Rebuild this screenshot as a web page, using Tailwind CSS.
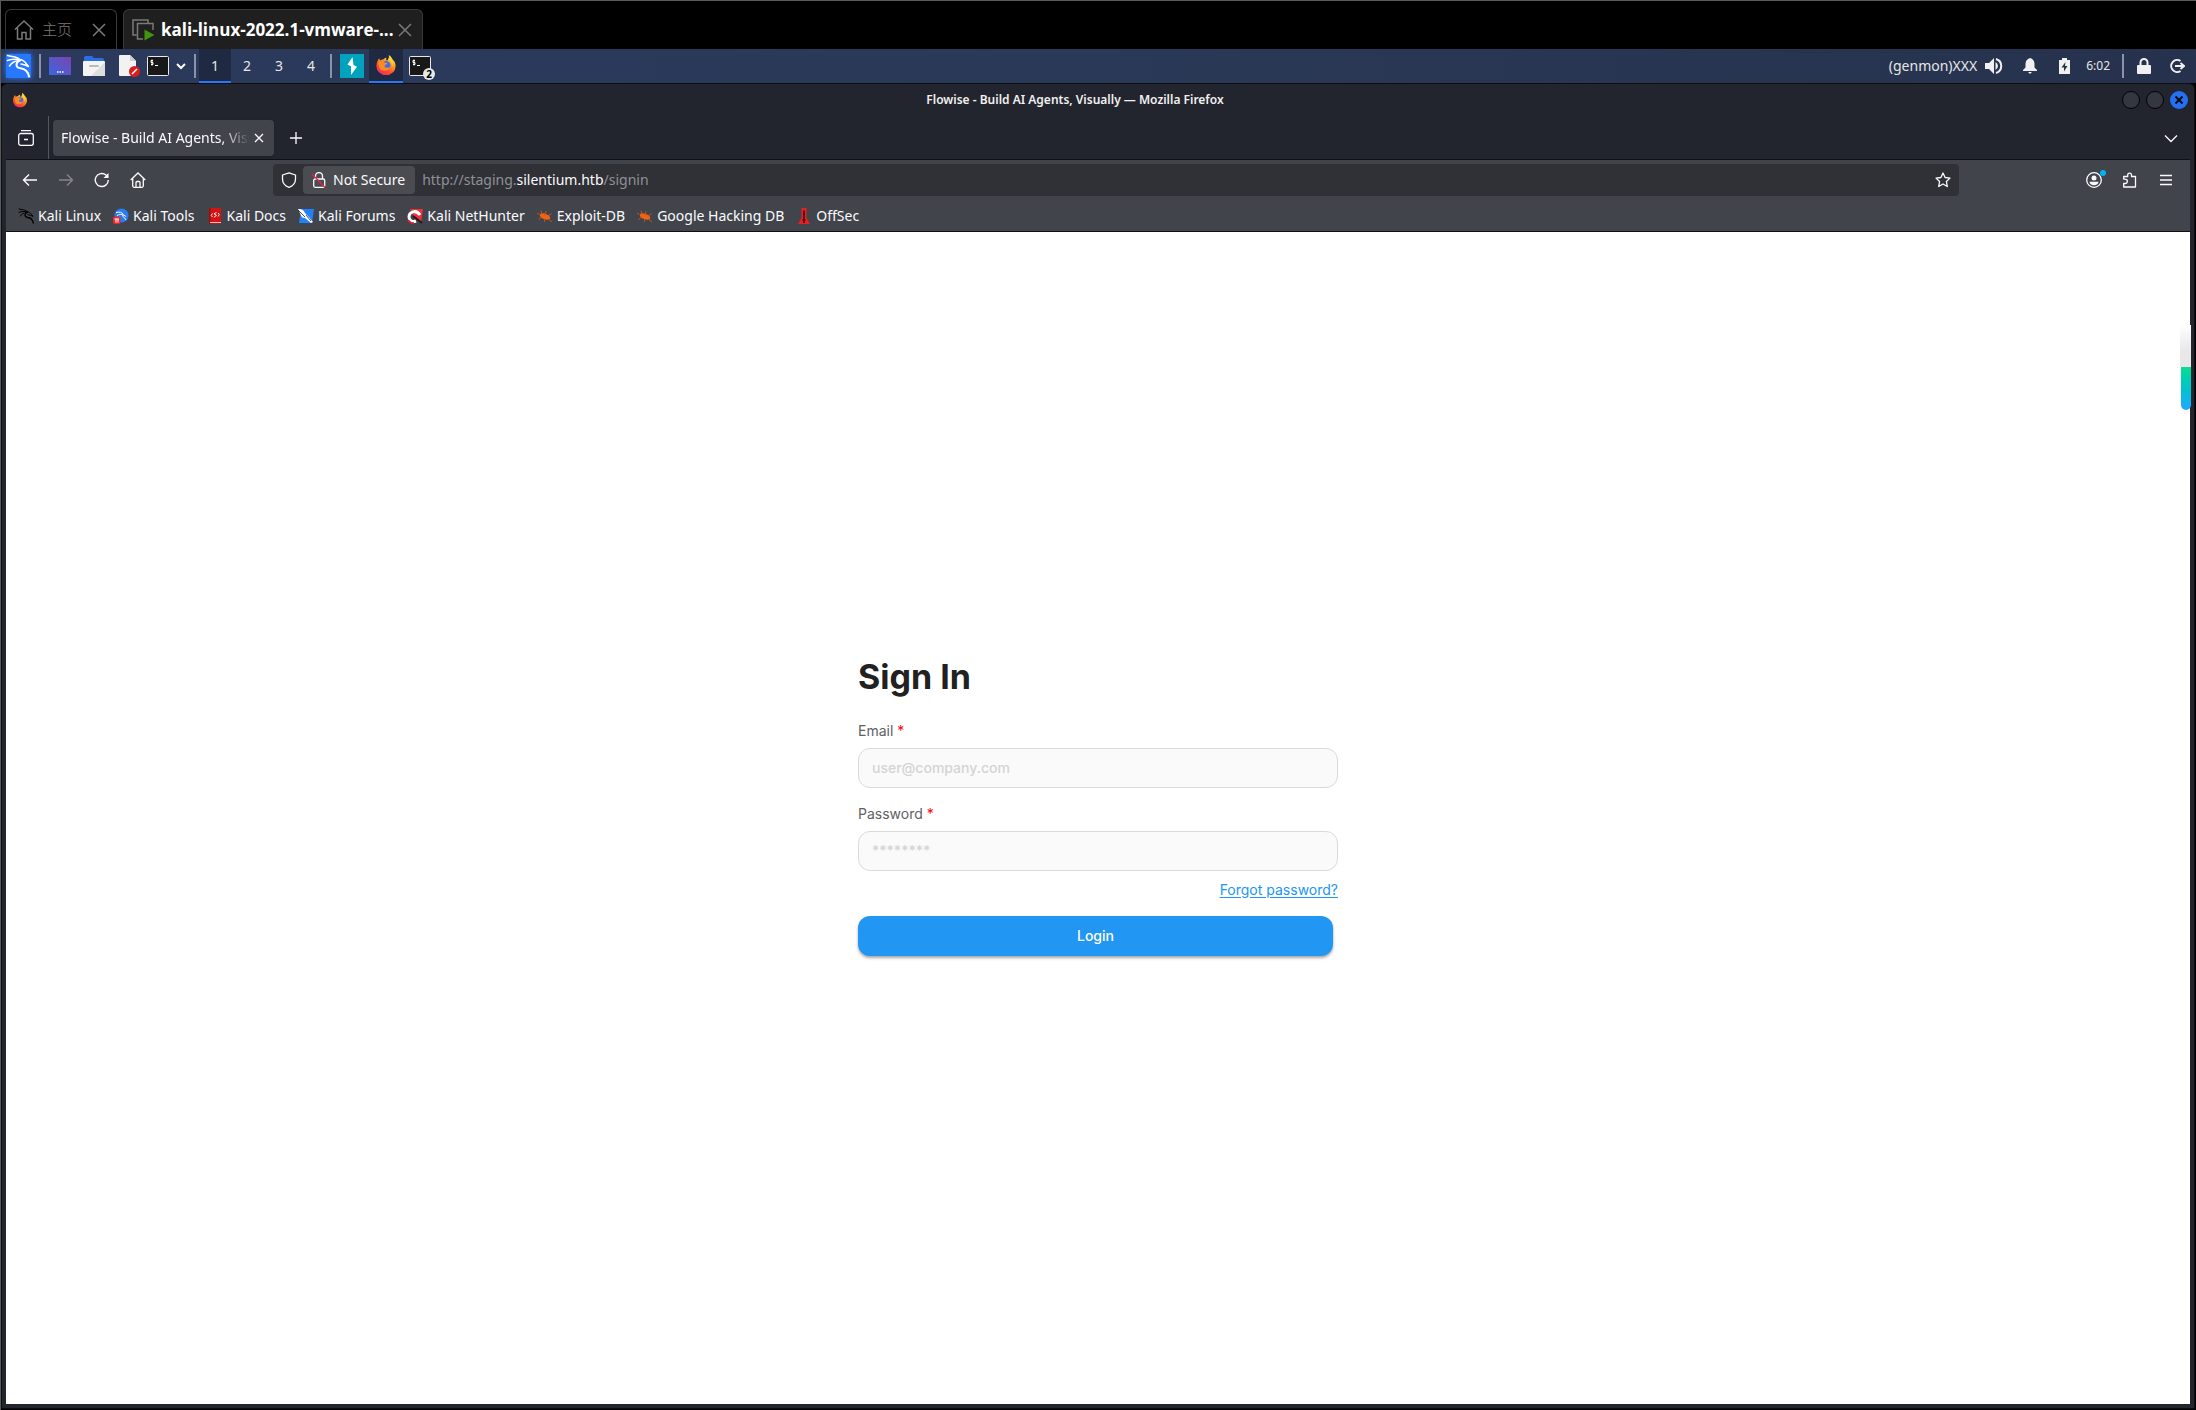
<!DOCTYPE html>
<html lang="en">
  <head>
    <meta charset="UTF-8" />
    <meta name="viewport" content="width=device-width, initial-scale=1.0" />
    <title>Flowise - Build AI Agents, Visually</title>
    <script src="https://cdn.jsdelivr.net/npm/@tailwindcss/browser@4"></script>
  </head>
  <body
    class="min-h-screen flex flex-col bg-black border-t border-l border-[#5a5a5a] font-['Noto_Sans','Noto_Sans_CJK_SC',sans-serif]"
  >
    <!-- shared symbols -->
    <svg class="absolute w-0 h-0" aria-hidden="true">
      <linearGradient id="fox-body" x1="0.8" y1="0" x2="0.2" y2="1">
        <stop offset="0" stop-color="#fff14a" />
        <stop offset="0.35" stop-color="#ffa21f" />
        <stop offset="0.7" stop-color="#ff4a2e" />
        <stop offset="1" stop-color="#e8267a" />
      </linearGradient>
      <linearGradient id="desk" x1="0" y1="1" x2="1" y2="0">
        <stop offset="0" stop-color="#3a66e0" />
        <stop offset="1" stop-color="#7b45b0" />
      </linearGradient>
      <symbol id="firefox" viewBox="0 0 24 24">
        <path
          d="M15 1c3 2 4 4 4.500 5.500C21 7 22.500 10 22.500 13a10.500 10 0 0 1-21 0c0-3.500 1.500-6.500 3-8.500l1 2.500c1-.8 2.500-1 3.500-1C10 4.500 11.500 4 12.500 4c-.5 1-.5 2 0 3 2.500 0 3-3 2.500-6z"
          fill="url(#fox-body)"
        />
        <circle cx="12" cy="12.500" r="4.800" fill="#3f6df0" />
        <path
          d="M4 9c3-2 5-1 7 .5 1.500 0 2.500.5 2.500 1.200-1 1-2.500.8-3 1.800-.5 2.500 3 3.500 6 1.500-1 4-6 5.500-9.500 3.500C4.500 16 3.500 12 4 9z"
          fill="#ff8a1e"
        />
        <path d="M14 6c3 1 5 4 4.500 8 2-3 1.500-8-3-11 .3 1-.5 2-1.500 3z" fill="#ffd23c" />
      </symbol>
      <symbol id="dragon" viewBox="0 0 24 24">
        <path
          d="M1.500 1.500c5 1.500 9 .5 12.500 4M1.500 6.500c4-1.500 8-1.500 12-1M3.500 12c2-3 5-5 9-5.500M13 5.500c3 0 5.500 1.500 7.500 4.500l2 2.500-3.500-1.500-4-1"
          fill="none"
          stroke="currentColor"
          stroke-width="1.500"
          stroke-linecap="round"
          stroke-linejoin="round"
        />
        <path
          d="M14 6.500c-4.500 1.500-5 7 .5 7.700 5 .6 7.500 3 8.500 8.300"
          fill="none"
          stroke="currentColor"
          stroke-width="2"
          stroke-linecap="round"
        />
      </symbol>
      <symbol id="terminal" viewBox="0 0 22 20">
        <rect x="0.500" y="0.500" width="21" height="19" rx="1" fill="#181818" stroke="#e8e8e8" />
        <path
          d="M6 4.500H4v2h2v2H4M5 3.500v6M8 9.500h3"
          fill="none"
          stroke="#fff"
          stroke-width="1"
        />
      </symbol>
      <symbol id="bug" viewBox="0 0 16 16">
        <ellipse cx="8" cy="8.500" rx="5.500" ry="2.800" transform="rotate(22 8 8.500)" fill="#f06414" />
        <path
          d="M5 6L4 3M8 7l1-3.500M11 8l3-2M4 9l-2 2.500M8 11l-.5 2.500M12 11.500l2.500 2M2 6L.5 5.500"
          stroke="#c9541a"
          stroke-width="1"
          stroke-linecap="round"
        />
      </symbol>
    </svg>

    <!-- virtual machine tabs -->
    <div class="flex items-end gap-1.5 pl-1 pt-2 text-[#7a7a7a]">
      <div
        class="w-28 h-10 flex items-center pl-2 pr-2.5 border border-b-0 border-[#3a3a3a] rounded-t-md"
      >
        <svg class="w-5 h-5" viewBox="0 0 20 20" fill="none" stroke="currentColor" stroke-width="1.500">
          <path d="M1 9.500L10 1l9 8.500M3.500 8v11H8v-6.500h4V19h4.500V8" />
        </svg>
        <span class="ml-2 text-[15px] font-light">主页</span>
        <button type="button" aria-label="Close" class="ml-auto">
          <svg class="w-3.5 h-3.5" viewBox="0 0 14 14" stroke="currentColor" stroke-width="1.500">
            <path d="M1 1l12 12M13 1L1 13" />
          </svg>
        </button>
      </div>
      <div
        class="w-[300px] h-10 flex items-center pl-2 pr-2.5 bg-[#1f1f1f] border border-b-0 border-[#3a3a3a] rounded-t-md"
      >
        <svg class="w-[22px] h-[22px]" viewBox="0 0 22 22" fill="none" stroke="currentColor" stroke-width="1.500">
          <path d="M4.500 16H1V1h15v3M11 20H5.500V4.500H21V11" />
          <path d="M12.500 10.500v11l10-5.500z" fill="#3f9410" stroke="none" />
        </svg>
        <span class="flex-1 ml-[7px] whitespace-nowrap text-[17px] font-bold text-white font-['Open_Sans',sans-serif]"
          >kali-linux-2022.1-vmware-...</span
        >
        <button type="button" aria-label="Close">
          <svg class="w-3.5 h-3.5" viewBox="0 0 14 14" stroke="currentColor" stroke-width="1.500">
            <path d="M1 1l12 12M13 1L1 13" />
          </svg>
        </button>
      </div>
    </div>

    <!-- desktop panel -->
    <nav
      class="h-[34px] flex items-center bg-linear-to-r from-[#2b3a5c] via-[#2a3957] to-[#26324d] text-[#e6e6e6] text-sm"
    >
      <div class="w-[25px] h-6 ml-[5px] bg-[#2777ff] shadow-[0_0_6px_#2777ff] text-white">
        <svg class="w-6 h-6"><use href="#dragon" /></svg>
      </div>
      <div class="w-0.5 h-6 ml-2 bg-[#8a93a8]"></div>
      <svg class="w-[22px] h-[18px] ml-2" viewBox="0 0 22 18">
        <rect width="22" height="18" fill="url(#desk)" />
        <path d="M8 15h1.500M10.500 15H12M13 15h1.500" stroke="#fff" stroke-width="1.500" />
      </svg>
      <svg class="w-[22px] h-5 ml-3" viewBox="0 0 22 20">
        <path d="M1 2a2 2 0 0 1 2-2h6l2 2h8a2 2 0 0 1 2 2v4H1z" fill="#2a6fe8" />
        <rect y="5" width="22" height="15" rx="1" fill="#f4f4f4" />
        <path d="M22 6v14H8z" fill="#dedede" />
        <path d="M7 10h8" stroke="#bbb" stroke-width="2" stroke-linecap="round" />
      </svg>
      <svg class="w-[22px] h-[22px] ml-3.5" viewBox="0 0 22 22">
        <path d="M0 1a1 1 0 0 1 1-1h10l6 6v14a1 1 0 0 1-1 1H1a1 1 0 0 1-1-1z" fill="#f2f2f2" />
        <path d="M11 0v6h6z" fill="#cfcfcf" />
        <circle cx="15.500" cy="16.500" r="5.500" fill="#d81e1e" />
        <path d="M13 19l5-5" stroke="#fff" stroke-width="1.500" />
      </svg>
      <svg class="w-[22px] h-5 ml-1.5"><use href="#terminal" /></svg>
      <svg class="w-2.5 h-2.5 ml-[7px]" viewBox="0 0 10 10" fill="none" stroke="#fff" stroke-width="2">
        <path d="M1 3l4 4 4-4" />
      </svg>
      <div class="w-0.5 h-6 ml-2 mr-[3px] bg-[#8a93a8]"></div>
      <button type="button" class="w-8 h-full border-b-2 border-[#2777ff] bg-[#1f2942] pt-0.5">1</button>
      <button type="button" class="w-8 h-full">2</button>
      <button type="button" class="w-8 h-full">3</button>
      <button type="button" class="w-8 h-full">4</button>
      <div class="w-0.5 h-6 ml-[3px] bg-[#8a93a8]"></div>
      <svg class="w-6 h-6 ml-2" viewBox="0 0 24 24">
        <rect width="24" height="24" fill="#00a3bd" />
        <path d="M12.500 3L7.500 10.500l3.500 1.800V21l6-8.200-3.500-1.800z" fill="#fff" />
      </svg>
      <button
        type="button"
        aria-label="Firefox"
        class="w-[34px] h-full ml-[5px] flex items-center justify-center border-b-2 border-[#2777ff] bg-[#1f2942]"
      >
        <svg class="w-[22px] h-[22px]"><use href="#firefox" /></svg>
      </button>
      <div class="relative ml-1.5">
        <svg class="w-[22px] h-5"><use href="#terminal" /></svg>
        <span
          class="absolute left-3.5 top-3 w-3 h-3 rounded-full bg-[#e8e8e8] text-black text-[10px] leading-3 font-bold text-center"
          >2</span
        >
      </div>
      <span class="ml-auto">(genmon)XXX</span>
      <svg class="w-[18px] h-4 ml-2" viewBox="0 0 18 16" fill="#f0f0f0">
        <path d="M0 5h4l5-5v16l-5-5H0z" />
        <path d="M10.500 4a4.500 4.500 0 0 1 0 8z" />
        <path d="M11 1a7.300 7.300 0 0 1 0 14" fill="none" stroke="#f0f0f0" stroke-width="2" />
      </svg>
      <svg class="w-3.5 h-4 ml-5" viewBox="0 0 14 16" fill="#f0f0f0">
        <path d="M7 0c3 1 4.500 3 4.500 6v3.500L14 12v1H0v-1l2.500-2.500V6C2.500 3 4 1 7 0zM5 14h4l-2 2z" />
      </svg>
      <svg class="w-[11px] h-4 ml-[22px]" viewBox="0 0 11 16">
        <path d="M0 2h3V0h5v2h3v14H0z" fill="#f0f0f0" />
        <path d="M6.500 4L2.500 9.500H5v4l3.500-5.500H6z" fill="#26344a" />
      </svg>
      <span class="ml-4 text-xs">6:02</span>
      <div class="w-0.5 h-6 ml-3 bg-[#8a93a8]"></div>
      <svg class="w-3.5 h-4 ml-[13px]" viewBox="0 0 14 16">
        <rect y="7" width="14" height="9" rx="1" fill="#f0f0f0" />
        <path d="M3.500 8V4.500a3.500 3.500 0 0 1 7 0V8" fill="none" stroke="#f0f0f0" stroke-width="2" />
      </svg>
      <svg class="w-4 h-4 ml-[18px] mr-[11px]" viewBox="0 0 16 16" fill="none" stroke="#f0f0f0" stroke-width="2">
        <path d="M11.500 3A6 6 0 1 0 11.500 13M6 8h8M11.500 5L15 8l-3.500 3" />
      </svg>
    </nav>

    <!-- browser window -->
    <div class="flex-1 flex flex-col bg-[#23252e] border border-[#0d0e12] rounded-t-md px-1 pb-1 mr-px mb-px">
      <div class="h-8 flex items-center pl-1.5 pr-0.5 gap-1.5">
        <svg class="w-4 h-4"><use href="#firefox" /></svg>
        <span class="flex-1 text-center text-xs font-semibold text-[#f0f0f0]"
          >Flowise - Build AI Agents, Visually — Mozilla Firefox</span
        >
        <button type="button" aria-label="Minimize" class="w-[18px] h-[18px] rounded-full border border-black bg-[#343741]"></button>
        <button type="button" aria-label="Maximize" class="w-[18px] h-[18px] rounded-full border border-black bg-[#343741]"></button>
        <button
          type="button"
          aria-label="Close"
          class="w-[18px] h-[18px] rounded-full bg-[#2470f5] flex items-center justify-center"
        >
          <svg class="w-2 h-2" viewBox="0 0 8 8" stroke="#0b0b12" stroke-width="2">
            <path d="M0.500 0.500l7 7M7.500 0.500l-7 7" />
          </svg>
        </button>
      </div>

      <div class="h-[43px] flex items-center pr-3 text-[#fbfbfe] text-sm">
        <button type="button" aria-label="Recent browsing" class="ml-3">
          <svg class="w-4 h-4" viewBox="0 0 16 16" fill="none" stroke="currentColor" stroke-width="1.300">
            <path d="M3 .7h10M6 9.500h4" />
            <path d="M.7 5.500a2 2 0 0 1 2-2h10.600a2 2 0 0 1 2 2v7.800a2 2 0 0 1-2 2H2.700a2 2 0 0 1-2-2z" />
          </svg>
        </button>
        <div class="w-px h-full ml-3.5 mr-1 bg-[#55575f]"></div>
        <div class="w-[221px] h-9 flex items-center pl-2 pr-2.5 bg-[#42444c] rounded shadow">
          <span class="flex-1 overflow-hidden whitespace-nowrap mask-r-from-85%">Flowise - Build AI Agents, Visually</span>
          <button type="button" aria-label="Close tab" class="ml-1">
            <svg class="w-2.5 h-2.5" viewBox="0 0 10 10" stroke="currentColor" stroke-width="1.300">
              <path d="M1 1l8 8M9 1L1 9" />
            </svg>
          </button>
        </div>
        <button type="button" aria-label="New tab" class="ml-4">
          <svg class="w-3 h-3" viewBox="0 0 12 12" stroke="currentColor" stroke-width="1.300">
            <path d="M6 0v12M0 6h12" />
          </svg>
        </button>
        <button type="button" aria-label="List all tabs" class="ml-auto">
          <svg class="w-3.5 h-3.5" viewBox="0 0 14 14" fill="none" stroke="currentColor" stroke-width="1.300">
            <path d="M1 4.500l6 6 6-6" />
          </svg>
        </button>
      </div>

      <div class="bg-[#42444c] border-y border-[#0f1014] text-[#fbfbfe] text-sm">
        <div class="h-10 flex items-center gap-1 pl-2 pr-2">
          <button type="button" aria-label="Back" class="w-8 h-8 flex items-center justify-center">
            <svg class="w-4 h-4" viewBox="0 0 16 16" fill="none" stroke="currentColor" stroke-width="1.400">
              <path d="M15 8H1.500M7 2.500L1.500 8 7 13.500" />
            </svg>
          </button>
          <button type="button" aria-label="Forward" class="w-8 h-8 flex items-center justify-center text-[#85868c]">
            <svg class="w-4 h-4" viewBox="0 0 16 16" fill="none" stroke="currentColor" stroke-width="1.400">
              <path d="M1 8h13.500M9 2.500L14.500 8 9 13.500" />
            </svg>
          </button>
          <button type="button" aria-label="Reload" class="w-8 h-8 flex items-center justify-center">
            <svg class="w-4 h-4" viewBox="0 0 16 16" fill="none" stroke="currentColor" stroke-width="1.400">
              <path d="M14.300 8A6.500 6.500 0 1 1 12 3l2 2" />
              <path d="M14.500 1v5h-5z" fill="currentColor" stroke="none" />
            </svg>
          </button>
          <button type="button" aria-label="Home" class="w-8 h-8 flex items-center justify-center">
            <svg class="w-4 h-4" viewBox="0 0 16 16" fill="none" stroke="currentColor" stroke-width="1.300">
              <path d="M.7 8L8 1l7.300 7M2.700 6.500v7.300a1.500 1.500 0 0 0 1.500 1.500h7.600a1.500 1.500 0 0 0 1.500-1.500V6.500" />
              <path d="M6 15v-4.500a1 1 0 0 1 1-1h2a1 1 0 0 1 1 1V15" />
            </svg>
          </button>

          <div class="flex-1 h-8 mx-[115px] flex items-center pl-2 pr-2 bg-[#303136] rounded">
            <svg class="w-4 h-4" viewBox="0 0 16 16" fill="none" stroke="currentColor" stroke-width="1.300">
              <path d="M8 .8L14.500 3v4c0 4-2.800 7-6.500 8.300C4.300 14 1.500 11 1.500 7V3z" stroke-linejoin="round" />
            </svg>
            <button type="button" class="h-7 ml-1.5 px-2 flex items-center gap-1.5 bg-[#4b4c51] rounded">
              <svg class="w-4 h-4" viewBox="0 0 16 16" fill="none" stroke="currentColor" stroke-width="1.300">
                <path d="M4.500 7V4a3.500 3.500 0 0 1 7 0v3" />
                <rect x="2.700" y="7" width="11" height="8.300" rx="1.500" />
                <path d="M1 2l13 13.500" stroke="#e9204f" />
              </svg>
              <span class="pr-0.5">Not Secure</span>
            </button>
            <a href="#" class="flex-1 ml-[7px] text-[#8f9096]"
              >http://staging.<span class="text-[#fbfbfe]">silentium.htb</span>/signin</a
            >
            <button type="button" aria-label="Bookmark this page">
              <svg class="w-4 h-4" viewBox="0 0 16 16" fill="none" stroke="currentColor" stroke-width="1.300">
                <path
                  d="M8 1l2.100 4.500 4.900.6-3.600 3.400.9 5L8 12l-4.300 2.500.9-5L1 6.100l4.900-.6z"
                  stroke-linejoin="round"
                />
              </svg>
            </button>
          </div>

          <button type="button" aria-label="Account" class="relative w-8 h-8 flex items-center justify-center">
            <svg class="w-4 h-4" viewBox="0 0 16 16">
              <circle cx="8" cy="8" r="7.300" fill="none" stroke="currentColor" stroke-width="1.300" />
              <circle cx="8" cy="6" r="2.500" fill="currentColor" />
              <path d="M3.500 9.700h9c0 2-2 3.500-4.500 3.500s-4.500-1.500-4.500-3.500z" fill="currentColor" />
            </svg>
            <span class="absolute right-1 top-1.5 w-1.5 h-1.5 rounded-full bg-[#00b3f4]"></span>
          </button>
          <button type="button" aria-label="Extensions" class="w-8 h-8 flex items-center justify-center">
            <svg class="w-4 h-4" viewBox="0 0 16 16" fill="none" stroke="currentColor" stroke-width="1.300">
              <path
                d="M1.700 7V4.500h4V3a1.900 1.900 0 0 1 3.800 0v1.500h4V15H1.700v-3.500h1.500a1.900 1.900 0 0 0 0-4.300z"
                stroke-linejoin="round"
              />
            </svg>
          </button>
          <button type="button" aria-label="Menu" class="w-8 h-8 flex items-center justify-center">
            <svg class="w-3 h-3" viewBox="0 0 12 12" stroke="currentColor" stroke-width="1.300">
              <path d="M0 1.500h12M0 6h12M0 10.500h12" />
            </svg>
          </button>
        </div>

        <div class="h-[31px] flex items-center gap-3 pl-3">
          <a href="#" class="flex items-center gap-1">
            <svg class="w-4 h-4 text-black"><use href="#dragon" /></svg>
            Kali Linux
          </a>
          <a href="#" class="flex items-center gap-1">
            <svg class="w-4 h-4" viewBox="0 0 16 16">
              <circle cx="8.500" cy="7.500" r="7" fill="#2a7bf5" />
              <path d="M3 4.500c4-1 6 0 7.500 2M4 7.500c4-2 6-1 9 1M10 7c-1.500 2 2 2 3 5" fill="none" stroke="#fff" />
              <rect y="8.500" width="7.500" height="7.500" rx="2" fill="#ee2b2b" />
              <path d="M1.500 11h4.500M3 11v3.500M5 11v3.500" stroke="#fff" />
            </svg>
            Kali Tools
          </a>
          <a href="#" class="flex items-center gap-1">
            <svg class="w-4 h-4" viewBox="0 0 16 16">
              <rect x="2" width="12" height="16" fill="#d41414" />
              <path d="M2 0h1.500v16H2z" fill="#9c0d0d" />
              <path d="M3 14.500h11" stroke="#e9c9c9" />
              <path d="M5.500 5.500L4.200 7.500l1.300 1.500M11 5l1.300 1.500L11 8.500M9.500 4.500L7 5.800l2.500 1.500L7 9.300" fill="none" stroke="#fff" stroke-width=".9" />
            </svg>
            Kali Docs
          </a>
          <a href="#" class="flex items-center gap-1">
            <svg class="w-4 h-4" viewBox="0 0 16 16">
              <path d="M3 1h13l-2 14H1z" fill="#2280f8" />
              <path d="M0 1c3-.5 6 1 7 4l3 3 5 6-2 1-6-5-3-.5z" fill="#fff" />
              <path d="M0 2l7 7M8 7l5 6" stroke="#23252e" stroke-width=".8" />
            </svg>
            Kali Forums
          </a>
          <a href="#" class="flex items-center gap-1">
            <svg class="w-4 h-4" viewBox="0 0 16 16">
              <path d="M3 1h13l-2 14-6-4z" fill="#f2303a" />
              <path d="M13 7C9 1 2 4 2 9c0 3 3 5.500 7 4" fill="none" stroke="#fff" stroke-width="3" />
              <path d="M6 8l9 7" stroke="#1a1a20" stroke-width="2" />
              <path d="M1 12c2 3 4 3 6 3" fill="none" stroke="#e8202c" stroke-width="1.500" />
            </svg>
            Kali NetHunter
          </a>
          <a href="#" class="flex items-center gap-1">
            <svg class="w-4 h-4"><use href="#bug" /></svg>
            Exploit-DB
          </a>
          <a href="#" class="flex items-center gap-1">
            <svg class="w-4 h-4"><use href="#bug" /></svg>
            Google Hacking DB
          </a>
          <a href="#" class="flex items-center gap-1">
            <svg class="w-4 h-4" viewBox="0 0 16 16">
              <path d="M5.500 0h5v10l3.500 6H2l3.500-6z" fill="#e82024" />
              <path d="M8 2.500v12.500M6.500 12h3M7 6h2" stroke="#3a0a10" stroke-width="1.500" />
            </svg>
            OffSec
          </a>
        </div>
      </div>

      <main class="relative flex-1 flex flex-col items-center justify-center bg-white font-['Inter',sans-serif] text-sm">
        <form class="w-full max-w-[480px] flex flex-col pb-6">
          <h1 class="mb-6 text-[34px] leading-10 font-bold text-[#212121]">Sign In</h1>
          <label for="email" class="mb-[7px] text-[#616161]">Email <span class="text-[#ff0000]">*</span></label>
          <input
            type="email"
            id="email"
            placeholder="user@company.com"
            class="h-10 mb-4 px-[13px] rounded-xl border border-[#dadada] bg-[#fafafa] font-medium placeholder:text-[#d4d4d4]"
          />
          <label for="password" class="mb-[7px] text-[#616161]">Password <span class="text-[#ff0000]">*</span></label>
          <input
            type="password"
            id="password"
            placeholder="********"
            class="h-10 px-[13px] rounded-xl border border-[#dadada] bg-[#fafafa] font-medium placeholder:text-[#d4d4d4]"
          />
          <a href="#" class="self-end mt-[9px] mb-4 text-[#2196f3] underline underline-offset-2">Forgot password?</a>
          <button
            type="button"
            class="h-10 mr-[5px] rounded-xl bg-[#2196f3] text-white font-medium shadow-[0_2px_3px_rgba(0,0,0,0.35)]"
          >
            Login
          </button>
        </form>
        <!-- edge handle -->
        <div class="absolute -right-px top-[93px] w-[11px] flex flex-col items-end">
          <div class="w-full h-[42px] bg-linear-to-b from-white to-[#e8e8e8] to-60%"></div>
          <div class="w-2.5 h-[43px] rounded-b-md bg-linear-to-b from-[#0fdc8e] to-[#22a6ff]"></div>
        </div>
      </main>
    </div>
  </body>
</html>
